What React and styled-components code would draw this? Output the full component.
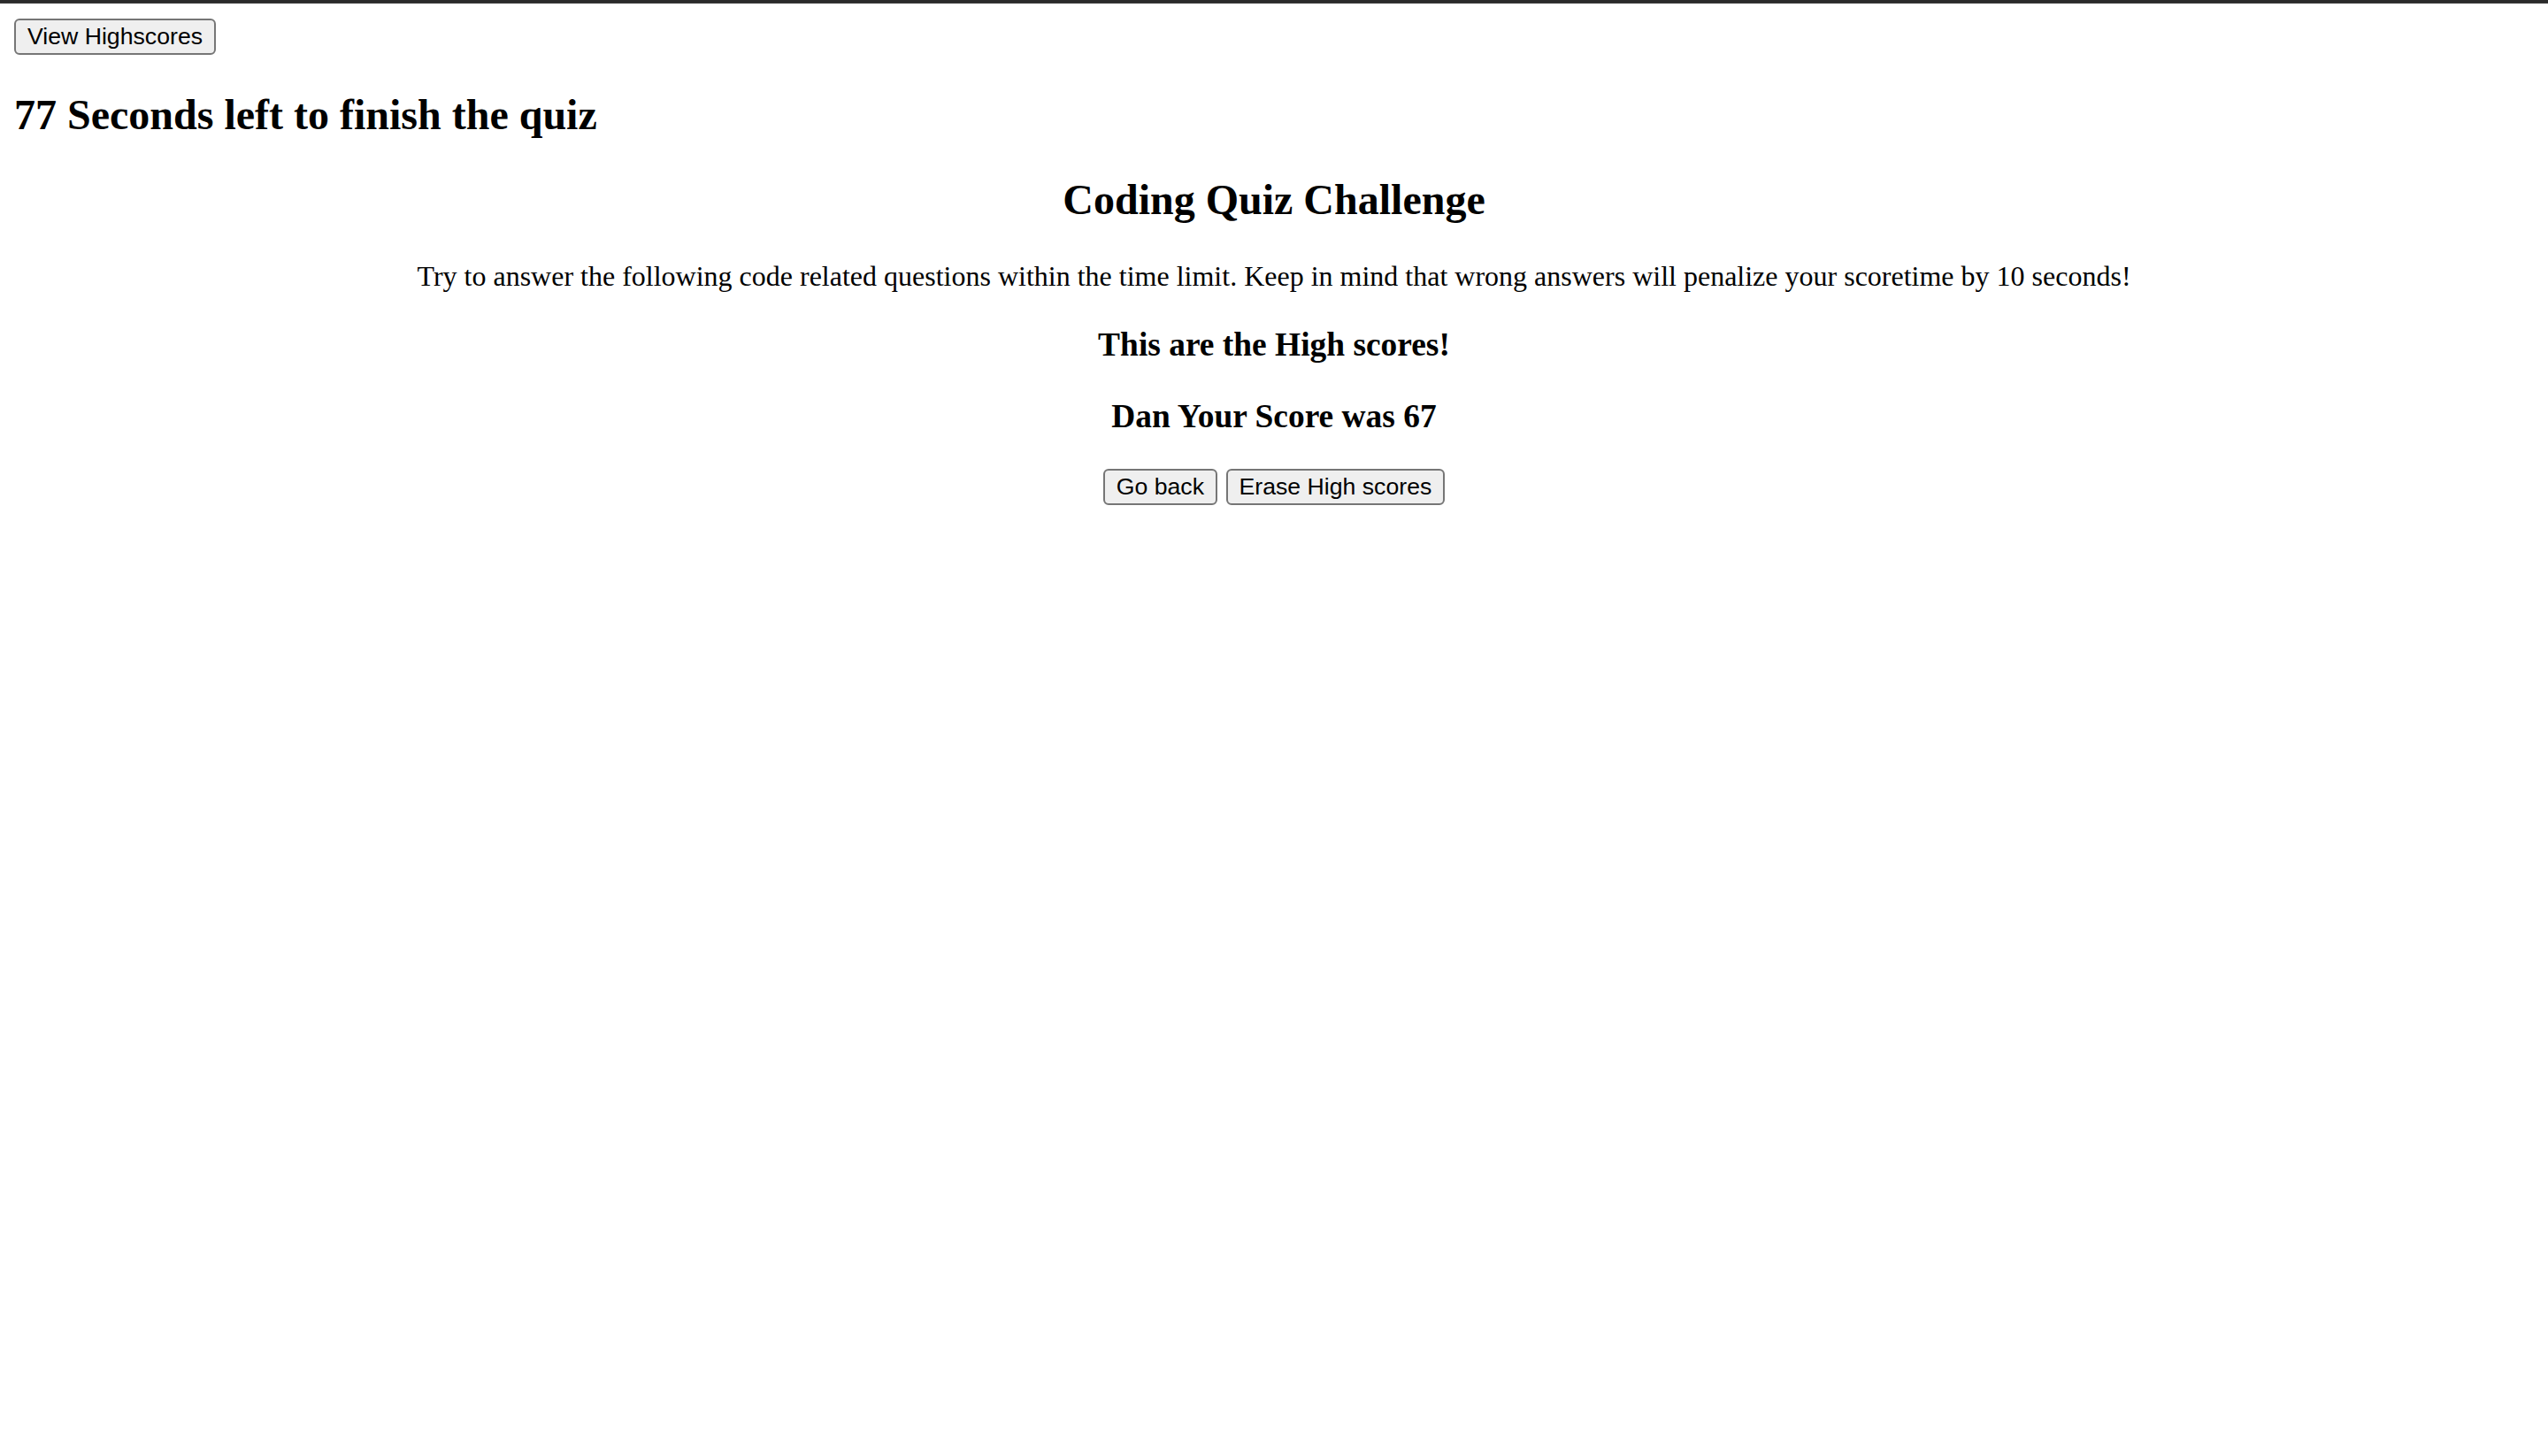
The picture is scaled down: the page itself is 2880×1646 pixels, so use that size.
import React from "react";
import styled, { createGlobalStyle } from "styled-components";

const GlobalStyle = createGlobalStyle`
	html, body {
		margin: 0;
		background: #fff;
	}

	body {
		font-family: "Liberation Serif", "Times New Roman", serif;
		color: #000;
	}
`;

const TopEdge = styled.div`
	height: 4px;
	background: #2b2b2b;
	border-bottom: 1px solid #3a3a3a;
	box-sizing: border-box;
`;

const Page = styled.div`
	padding: 17px 16px 16px;
`;

const Button = styled.button`
	font-family: "Liberation Sans", Arial, sans-serif;
	font-size: 26.67px;
	line-height: 31px;
	padding: 3px 13px;
	color: #000;
	background: #efefef;
	border: 2px solid #767676;
	border-radius: 6px;
	cursor: pointer;
`;

const Timer = styled.h2`
	font-size: 48px;
	line-height: 56px;
	font-weight: bold;
	margin: 40px 0;
`;

const Quiz = styled.section`
	text-align: center;
`;

const Title = styled.h2`
	font-size: 48px;
	line-height: 56px;
	font-weight: bold;
	margin: 40px 0;
`;

const Intro = styled.p`
	font-size: 32px;
	line-height: 37px;
	margin: 32px 0;
`;

const ScoreLine = styled.h3`
	font-size: 37.44px;
	line-height: 43.5px;
	font-weight: bold;
	margin: 37.44px 0;
`;

const Actions = styled.div`
	display: flex;
	justify-content: center;
	gap: 9.5px;
`;

const App = () => {
	const secondsLeft = 77;
	const scores = [{ name: "Dan", score: 67 }];

	return (
		<>
			<GlobalStyle />
			<TopEdge />
			<Page>
				<Button>View Highscores</Button>
				<Timer>{secondsLeft} Seconds left to finish the quiz</Timer>
				<Quiz>
					<Title>Coding Quiz Challenge</Title>
					<Intro>
						Try to answer the following code related questions within the time limit. Keep in mind that wrong answers will penalize your scoretime by 10 seconds!
					</Intro>
					<ScoreLine>This are the High scores!</ScoreLine>
					{scores.map(s => (
						<ScoreLine key={s.name}>{s.name} Your Score was {s.score}</ScoreLine>
					))}
					<Actions>
						<Button>Go back</Button>
						<Button>Erase High scores</Button>
					</Actions>
				</Quiz>
			</Page>
		</>
	);
};

export default App;
